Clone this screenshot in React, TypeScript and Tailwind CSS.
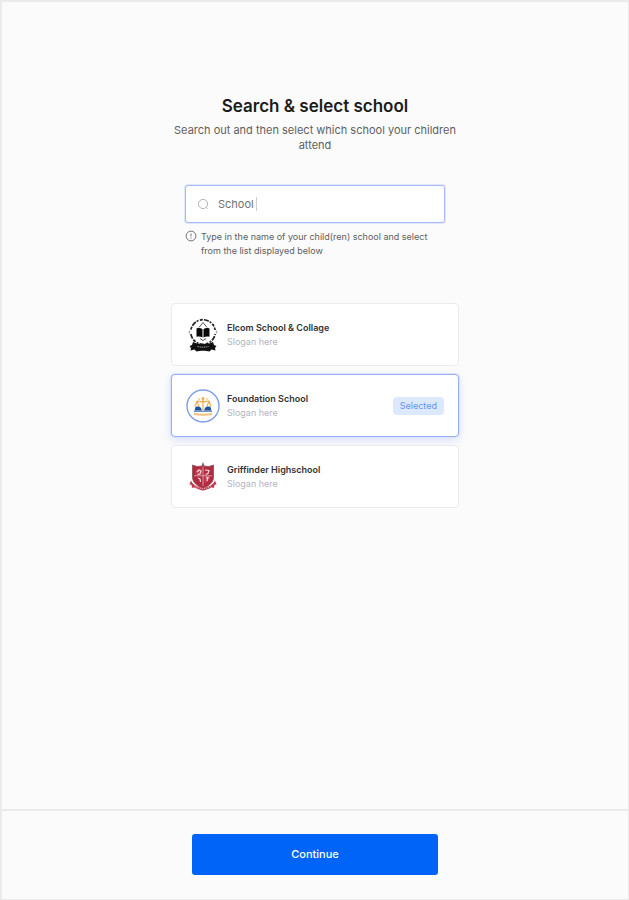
import { useState } from 'react';
import clsx from 'clsx';

const ElcomLogo = () => (
    <svg viewBox="0 0 34 34" className="h-[34px] w-[34px]" aria-hidden="true">
        <circle cx="17" cy="14" r="12.3" fill="none" stroke="#222" strokeWidth="1.7" strokeDasharray="3 1.2 5 1 2 1.4" />
        <path d="M1 14h5M28 14h5" stroke="#fff" strokeWidth="4" />
        <path d="M3.5 12.5v3M30.5 12.5v3" stroke="#aaa" strokeWidth="1.5" />
        <path d="M13 9.5 17 4.5l4 5" fill="none" stroke="#555" strokeWidth="1" />
        <path d="M10.5 10.5c2.5-.8 4.5-.5 6 .7v8.3c-1.5-1-3.5-1.2-6-.8zM23.5 10.5c-2.500-.8-4.500-.5-6 .7v8.300c1.500-1 3.500-1.200 6-.8z" fill="#080808" />
        <path d="M14 20.5l3 2 3-2" fill="none" stroke="#555" strokeWidth="1" />
        <path d="M7 24c6 3 14 3 20 0l1 3 2.5 1-1.5 2 .5 2.5-4-1-2 2c-3.5-1-9.5-1-13 0l-2-2-4 1 .5-2.500-1.500-2L6 27z" fill="#111" />
        <path d="M11.5 28.5c3.5.9 7.5.9 11 0" fill="none" stroke="#999" strokeWidth="1" strokeDasharray="1.5 .6" />
    </svg>
);

const FoundationLogo = () => (
    <svg viewBox="0 0 34 34" className="h-[34px] w-[34px]" aria-hidden="true">
        <circle cx="17" cy="17" r="16" fill="#fff" stroke="#7d9eea" strokeWidth="1.4" />
        <g fill="none" stroke="#efad52" strokeWidth="1.2">
            <path d="M17 9v12M11 12c2-.2 3 .8 6 .8s4-1 6-.8M11 12l-2 5.5M11 12l2 5.5M23 12l-2 5.5M23 12l2 5.5" />
            <path d="M12.5 9.5l1 1M21.5 9.5l-1 1" />
        </g>
        <circle cx="17" cy="9.5" r="1.5" fill="#efad52" />
        <path d="M9.500 18c2-.8 4-.4 5.500 1l1 2.500H8.500zM24.500 18c-2-.8-4-.4-5.500 1l-1 2.500h7.500z" fill="#1f559f" />
        <path d="M8 22.2h18" stroke="#2d5ea5" strokeWidth="1" />
        <path d="M8 25c6 1 12 1 18 0" fill="none" stroke="#f3bb75" strokeWidth="2.2" />
        <path d="M9.5 25.3c5 .8 10 .8 15 0" fill="none" stroke="#f8d3a0" strokeWidth=".8" strokeDasharray="1 .8" />
    </svg>
);

const GriffinderLogo = () => (
    <svg viewBox="0 0 34 34" className="h-[34px] w-[34px]" aria-hidden="true">
        <path d="M17 2l1.500 3.500-1.500 2-1.500-2z" fill="#94656c" />
        <path d="M6.500 5l4.500 1.500L17 6l6 .5L27.500 5v12c0 6-5 9-10.500 11.500C11.500 26 6.500 23 6.500 17z" fill="#b22a3f" stroke="#8a5059" strokeWidth=".8" />
        <path d="M9.500 9.500c2-.8 4.500-.8 6.500-.5v6H9.500zM18.500 16H24c0 4-2.500 6-5.500 8z" fill="#c93c4f" />
        <path d="M11 12l2-2 2 1-1 3-2.500.5M19 10l4 .5-1 3-2.500 1M12 18l2 1 .5 3M20 18l2-.5-1 3.500" fill="none" stroke="#f3d9dd" strokeWidth="1.2" />
        <path d="M8 15.8h18M17 7v19" stroke="#e5b6bd" strokeWidth=".8" />
        <path d="M5 20.500c2 5 7 6.500 12 7.500 5-1 10-2.500 12-7.500l1.500 4-2 .3-.5 3-3-.3c-2 1.500-5 2.300-8 3-3-.7-6-1.500-8-3l-3 .3-.5-3-2-.3z" fill="#c2354a" />
        <path d="M8.500 25.800c5 3.500 12 3.500 17 0" fill="none" stroke="#e8b8c0" strokeWidth=".9" strokeDasharray="1.3 .7" />
    </svg>
);

const schools = [
    { id: 'elcom', name: 'Elcom School & Collage', slogan: 'Slogan here', Logo: ElcomLogo },
    { id: 'foundation', name: 'Foundation School', slogan: 'Slogan here', Logo: FoundationLogo },
    { id: 'griffinder', name: 'Griffinder Highschool', slogan: 'Slogan here', Logo: GriffinderLogo },
];

const App = () => {
    const [query, setQuery] = useState('School');
    const [selected, setSelected] = useState('foundation');

    return (
        <div className="flex min-h-screen flex-col border-2 border-r border-b border-[#ebebeb] bg-[#fbfbfb] font-['Inter',sans-serif] text-[#1b1b1b]">
            <main className="mx-auto flex w-full max-w-72 grow flex-col pt-[92px]">
                <h1 className="text-center text-[17px] leading-6 font-semibold">Search &amp; select school</h1>
                <p className="mt-[5px] text-center text-[11px] leading-[15px] text-[#606060]">
                    Search out and then select which school your children attend
                </p>

                <div className="mx-[14px] mt-8">
                    <div className="relative">
                        <label htmlFor="school-search" className="absolute top-3 left-3">
                            <svg viewBox="0 0 14 14" className="h-[14px] w-[14px]" fill="none" stroke="#b4b4b4" role="img" aria-label="Search">
                                <circle cx="6" cy="7" r="4.6" />
                                <path d="M9.3 10.3l1.4 1.4" />
                            </svg>
                        </label>
                        <input
                            id="school-search"
                            type="text"
                            value={query}
                            onChange={(e) => setQuery(e.target.value)}
                            className="block h-[38px] w-full rounded-[3px] border border-[#a9b8f6] bg-white pr-3 pl-8 text-[11px] text-[#707070] ring-1 ring-[#e2e7ff] outline-none"
                        />
                        {query === 'School' && <span className="absolute top-3 left-[71px] h-[14px] w-px bg-[#cfcfcf]" />}
                    </div>
                    <div className="mt-[7px] flex gap-1">
                        <svg viewBox="0 0 12 12" className="h-3 w-3 shrink-0" fill="none" stroke="#666" strokeWidth=".9" aria-hidden="true">
                            <circle cx="6" cy="6" r="4.9" />
                            <path d="M6 3.500v3M6 7.700v1" />
                        </svg>
                        <p className="text-[9px] leading-[14px] text-[#606060]">
                            Type in the name of your child(ren) school and select from the list displayed below
                        </p>
                    </div>
                </div>

                <ul className="mt-[45px] space-y-2">
                    {schools.map(({ id, name, slogan, Logo }) => (
                        <li key={id}>
                            <button
                                type="button"
                                aria-pressed={selected === id}
                                onClick={() => setSelected(id)}
                                className={clsx(
                                    'flex h-[63px] w-full items-center rounded border bg-white px-[14px] text-left',
                                    selected === id
                                        ? 'border-[#98aef5] shadow-[0_3px_10px_rgba(80,130,240,0.22)] ring-1 ring-[#dbe3ff]'
                                        : 'border-[#ebebeb]'
                                )}
                            >
                                <Logo />
                                <span className="ml-[7px] grow">
                                    <span className="block text-[9px] leading-[14px] font-semibold text-[#333]">{name}</span>
                                    <span className="block text-[9px] leading-[14px] text-[#b4b4bd]">{slogan}</span>
                                </span>
                                {selected === id && (
                                    <span className="rounded bg-[#dce8fb] px-[7px] text-[9px] leading-[18px] text-[#6594ed]">Selected</span>
                                )}
                            </button>
                        </li>
                    ))}
                </ul>
            </main>

            <footer className="mt-8 border-t-2 border-[#ebebeb] px-4 pt-[23px] pb-6">
                <button
                    type="button"
                    className="mx-auto block h-[41px] w-full max-w-[246px] rounded-[3px] bg-[#0064f8] text-[11px] font-medium text-white"
                >
                    Continue
                </button>
            </footer>
        </div>
    );
};

export default App;
